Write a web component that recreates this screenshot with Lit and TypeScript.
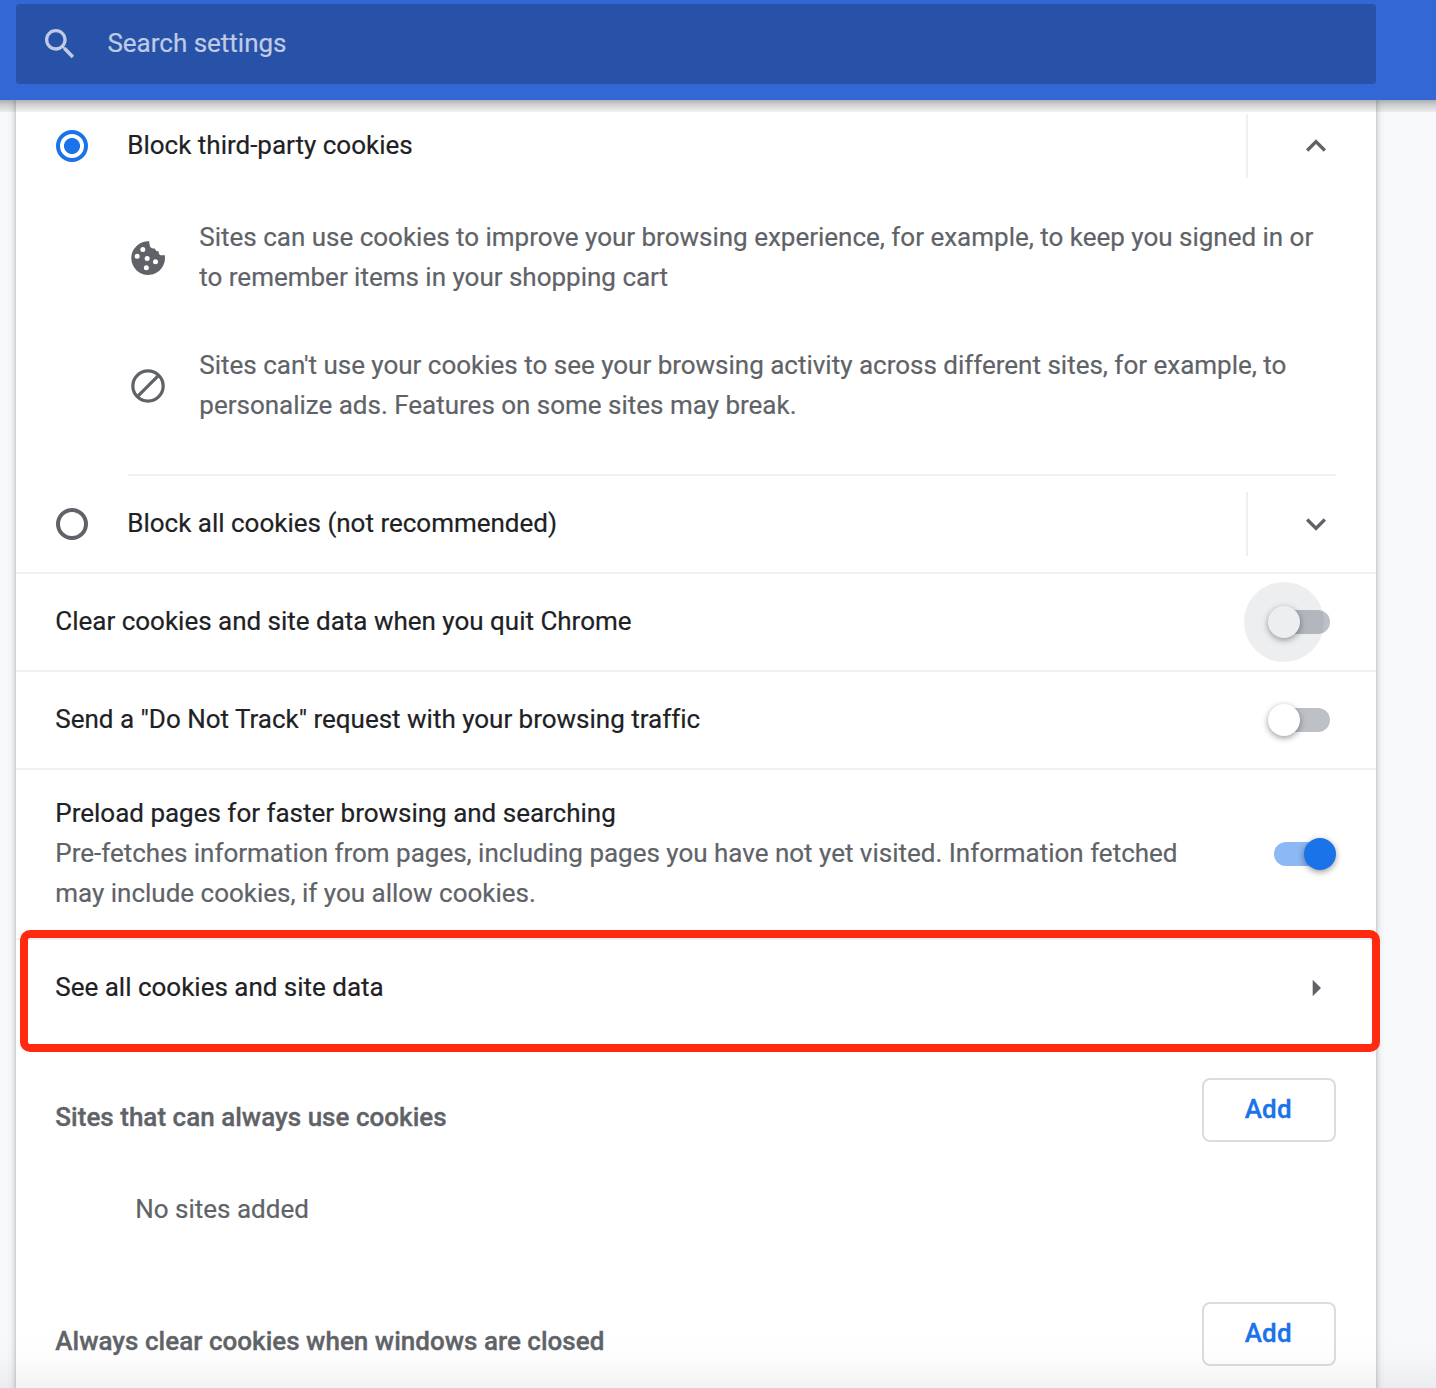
import { LitElement, html, css, svg } from "lit";
import { customElement, property } from "lit/decorators.js";

const icons = {
  search: svg`<path d="M15.5 14h-.79l-.28-.27C15.41 12.59 16 11.11 16 9.5 16 5.91 13.09 3 9.5 3S3 5.91 3 9.5 5.91 16 9.5 16c1.61 0 3.09-.59 4.23-1.57l.27.28v.79l5 4.99L20.49 19l-4.99-5zm-6 0C7.01 14 5 11.99 5 9.5S7.01 5 9.5 5 14 7.01 14 9.5 11.99 14 9.5 14z"/>`,
  up: svg`<path d="M12 8l-6 6 1.41 1.41L12 10.83l4.59 4.58L18 14z"/>`,
  down: svg`<path d="M16.59 8.59L12 13.17 7.41 8.59 6 10l6 6 6-6z"/>`,
  right: svg`<path d="M10 7l5 5-5 5z"/>`,
  cookie: svg`<path transform="translate(-.2 0)" fill-rule="evenodd" d="M13 2A10.1 10.1 0 1 0 22.2 10.2Q20.1 10.8 18.9 9.7Q18.5 9 18.6 7.9Q16.8 8.1 16.2 6.3Q14.6 6.5 13.7 5.5Q12.9 4.2 13 2z
    M9.1 5.4a1.5 1.5 0 1 0 0 3a1.5 1.5 0 1 0 0-3z M5.7 9.4a1.5 1.5 0 1 0 0 3a1.5 1.5 0 1 0 0-3z M11.7 10.8a1.5 1.5 0 1 0 0 3a1.5 1.5 0 1 0 0-3z M16.7 12.8a1.5 1.5 0 1 0 0 3a1.5 1.5 0 1 0 0-3z M11.2 16.4a1.5 1.5 0 1 0 0 3a1.5 1.5 0 1 0 0-3z"/>`,
  block: svg`<g fill="none" stroke="currentColor" stroke-width="1.95"><circle cx="12" cy="12" r="9.1"/><path d="M5.5 18.5l13-13"/></g>`,
};

const icon = (name: keyof typeof icons) =>
  html`<svg class="icon" viewBox="0 0 24 24" fill="currentColor" aria-hidden="true">${icons[name]}</svg>`;

@customElement("settings-toggle")
class SettingsToggle extends LitElement {
  @property({ type: Boolean, reflect: true }) checked = false;
  @property({ type: Boolean, reflect: true }) ripple = false;
  static styles = css`
    :host { display: block; position: relative; width: 68px; height: 32px; flex: none; }
    .bar { position: absolute; left: 6px; top: 4px; width: 56px; height: 24px; border-radius: 12px; background: #bdc1c6; }
    .knob { position: absolute; left: 0; top: 0; width: 32px; height: 32px; border-radius: 50%; background: #fff; box-shadow: 0 2px 6px rgba(0, 0, 0, 0.4); }
    .halo { position: absolute; left: -24px; top: -24px; width: 80px; height: 80px; border-radius: 50%; background: rgba(95, 99, 120, 0.11); }
    :host([checked]) .bar { background: #8cb8f3; }
    :host([checked]) .knob { left: 36px; background: #1a73e8; }
  `;
  render() {
    return html`<div class="bar"></div><div class="knob"></div>${this.ripple ? html`<div class="halo"></div>` : ""}`;
  }
}

@customElement("app-root")
class AppRoot extends LitElement {
  static styles = css`
    :host {
      display: block; position: relative; height: 1388px; overflow: hidden; background: #f8f9fa;
      font: 400 26px/40px Roboto, "Liberation Sans", sans-serif; color: #202124;
      letter-spacing: -0.008px; font-variant-ligatures: none;
      -webkit-text-stroke: 0.2px currentColor;
    }
    * { box-sizing: border-box; }
    .icon { width: 40px; height: 40px; display: block; flex: none; }
    .toolbar { position: relative; z-index: 2; height: 100px; padding: 4px 60px 0 16px; background: #3367d6; }
    .shade { position: absolute; left: 0; right: 0; top: 100px; height: 12px; z-index: 2;
      background: linear-gradient(rgba(0, 0, 0, 0.3), rgba(0, 0, 0, 0.17) 42%, rgba(0, 0, 0, 0.05)); }
    .search { height: 80px; border-radius: 4px; background: #2852a7; display: flex; align-items: center; padding: 0 24px 0 24px; gap: 27.4px; color: #bfcbe5; }
    .search span { padding-bottom: 2px; }
    .card { margin: -2px 60px 0 16px; height: 1300px; background: #fff; box-shadow: 0 2px 4px rgba(60, 64, 67, 0.3), 0 2px 8px 2px rgba(60, 64, 67, 0.13); }
    .row { height: 96px; display: flex; align-items: center; padding: 0 40px 0 39.3px; }
    .label { flex: 1; padding-bottom: 2px; }
    .line { border-top: 2px solid #f0f0f0; height: 98px; }
    .radio { width: 32px; height: 32px; border-radius: 50%; border: 4px solid #5f6368; margin: 0 39.3px 0 0.7px; flex: none; }
    .radio.on { border-color: #1a73e8; background: radial-gradient(circle, #1a73e8 7.6px, transparent 8.4px); }
    .expand { width: 90px; height: 64px; border-left: 2px solid #f0f0f0; display: flex; align-items: center; padding-left: 48px; color: #5f6368; }
    .detail { display: flex; align-items: center; gap: 31.3px; margin: 24px 40px 0 112px; height: 80px; color: #5f6368; }
    .detail + .detail { margin-top: 48px; }
    .detail p, .tall p { margin: 0; padding-bottom: 2px; white-space: nowrap; }
    .divider { height: 2px; margin: 48px 40px 0 112px; background: #f0f0f0; }
    .tall { height: 170px; }
    .tall p { flex: 1; }
    .sub, .arrow { color: #5f6368; }
    .section { display: flex; justify-content: space-between; align-items: center; height: 64px; padding: 0 40px 0 39.3px; margin-top: 42px; color: #5f6368; }
    .section h2 { margin: 14px 0 0; font: inherit; font-weight: 500; letter-spacing: 0.02px; -webkit-text-stroke-width: 0.35px; }
    button { width: 134px; height: 64px; border: 2px solid #dadce0; border-radius: 8px; background: transparent; color: #1a73e8; font: inherit; font-weight: 500; letter-spacing: 0.2px; padding: 0 1.5px 3px 0; -webkit-text-stroke-width: 0.35px; }
    .empty { height: 160px; padding: 47px 0 0 119.3px; color: #5f6368; }
    .section.second { margin-top: 0; }
    .highlight { position: absolute; left: 20px; top: 930px; width: 1360px; height: 122px; border: 8px solid #ff2a10; border-radius: 10px; z-index: 3; }
    .fade { position: absolute; left: 0; right: 0; bottom: 0; height: 50px; background: linear-gradient(transparent, rgba(0, 0, 0, 0.01) 40%, rgba(0, 0, 0, 0.05)); z-index: 3; }
  `;
  render() {
    return html`
      <div class="toolbar"><div class="search">${icon("search")}<span>Search settings</span></div></div>
      <div class="shade"></div>
      <div class="card">
        <div class="row"><i class="radio on"></i><span class="label">Block third-party cookies</span><div class="expand">${icon("up")}</div></div>
        <div class="detail">${icon("cookie")}<p>Sites can use cookies to improve your browsing experience, for example, to keep you signed in or<br />to remember items in your shopping cart</p></div>
        <div class="detail">${icon("block")}<p>Sites can't use your cookies to see your browsing activity across different sites, for example, to<br />personalize ads. Features on some sites may break.</p></div>
        <div class="divider"></div>
        <div class="row"><i class="radio"></i><span class="label">Block all cookies (not recommended)</span><div class="expand">${icon("down")}</div></div>
        <div class="row line"><span class="label">Clear cookies and site data when you quit Chrome</span><settings-toggle ripple></settings-toggle></div>
        <div class="row line"><span class="label">Send a "Do Not Track" request with your browsing traffic</span><settings-toggle></settings-toggle></div>
        <div class="row line tall"><p>Preload pages for faster browsing and searching<br /><span class="sub">Pre-fetches information from pages, including pages you have not yet visited. Information fetched<br />may include cookies, if you allow cookies.</span></p><settings-toggle checked></settings-toggle></div>
        <div class="row line"><span class="label">See all cookies and site data</span><span class="arrow">${icon("right")}</span></div>
        <div class="section"><h2>Sites that can always use cookies</h2><button>Add</button></div>
        <div class="empty">No sites added</div>
        <div class="section second"><h2>Always clear cookies when windows are closed</h2><button>Add</button></div>
      </div>
      <div class="highlight"></div>
      <div class="fade"></div>
    `;
  }
}
